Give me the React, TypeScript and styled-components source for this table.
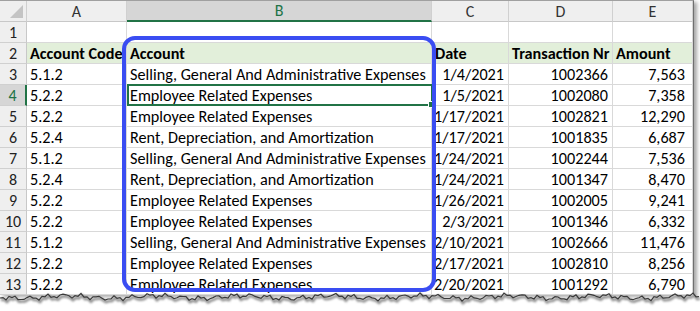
import React from 'react';
import styled, { createGlobalStyle } from 'styled-components';

const GlobalStyle = createGlobalStyle`
  html, body {
    margin: 0;
    padding: 0;
    background: #fff;
  }
  body {
    font-family: Carlito, Calibri, 'Liberation Sans', Arial, sans-serif;
  }
`;

const Frame = styled.div`
  position: relative;
  width: 700px;
  height: 311px;
  overflow: hidden;
  background: #fff;
`;

const Sheet = styled.div`
  display: grid;
  grid-template-columns: 27px 100px 305px 77px 104px 80px;
  grid-auto-rows: 21px;
  width: 693px;
  border-top: 1px solid #a0a0a0;
  border-right: 1px solid #6f6f6f;
  box-shadow: 3px 2px 4px rgba(0, 0, 0, 0.35);
  background: #fff;
  font-size: 16.2px;
  color: #000;
`;

const Corner = styled.div`
  position: relative;
  background: #efefef;
  border-right: 1px solid #d0d0d0;
  border-bottom: 1px solid #c8c8c8;

  &::after {
    content: '';
    position: absolute;
    right: 3px;
    bottom: 3px;
    width: 0;
    height: 0;
    border-left: 13px solid transparent;
    border-bottom: 13px solid #c4c4c4;
  }
`;

const ColHeader = styled.div<{ $active?: boolean }>`
  display: flex;
  align-items: center;
  justify-content: center;
  box-sizing: border-box;
  background: ${p => (p.$active ? '#d6d6d6' : '#efefef')};
  color: ${p => (p.$active ? '#217346' : '#333')};
  border-right: 1px solid #d0d0d0;
  border-bottom: ${p => (p.$active ? '2px solid #217346' : '1px solid #c8c8c8')};
  font-size: 16px;
`;

const RowHeader = styled.div<{ $active?: boolean }>`
  display: flex;
  align-items: center;
  justify-content: center;
  box-sizing: border-box;
  background: ${p => (p.$active ? '#d6d6d6' : '#efefef')};
  color: ${p => (p.$active ? '#217346' : '#222')};
  border-right: ${p => (p.$active ? '2px solid #217346' : '1px solid #c8c8c8')};
  border-bottom: 1px solid #d0d0d0;
  font-size: 16px;
`;

const Cell = styled.div<{ $align?: 'left' | 'right'; $head?: boolean; $padRight?: number }>`
  position: relative;
  display: flex;
  align-items: center;
  justify-content: ${p => (p.$align === 'right' ? 'flex-end' : 'flex-start')};
  box-sizing: border-box;
  padding: 0 ${p => p.$padRight ?? 4}px 0 3px;
  border-right: 1px solid #d9d9d9;
  border-bottom: 1px solid #d9d9d9;
  background: ${p => (p.$head ? '#e2efda' : '#fff')};
  font-weight: ${p => (p.$head ? 700 : 400)};
  white-space: nowrap;
  overflow: hidden;
`;

const Selected = styled.div`
  position: absolute;
  left: 127px;
  top: 84px;
  width: 306px;
  height: 22px;
  box-sizing: border-box;
  border: 2px solid #217346;
  pointer-events: none;

  &::after {
    content: '';
    position: absolute;
    right: -4px;
    bottom: -4px;
    width: 5px;
    height: 5px;
    background: #217346;
    border: 1px solid #fff;
  }
`;

const Highlight = styled.div`
  position: absolute;
  left: 122px;
  top: 36px;
  width: 314px;
  height: 256px;
  box-sizing: border-box;
  border: 4px solid #3a4df2;
  border-radius: 13px;
  pointer-events: none;
`;

const TornEdge = styled.svg`
  position: absolute;
  left: 0;
  bottom: 0;
  width: 700px;
  height: 22px;
`;

type Row = [string, string, string, string, string];

const SGA = 'Selling, General And Administrative Expenses';
const ERE = 'Employee Related Expenses';
const RDA = 'Rent, Depreciation, and Amortization';

const rows: Row[] = [
  ['5.1.2', SGA, '1/4/2021', '1002366', '7,563'],
  ['5.2.2', ERE, '1/5/2021', '1002080', '7,358'],
  ['5.2.2', ERE, '1/17/2021', '1002821', '12,290'],
  ['5.2.4', RDA, '1/17/2021', '1001835', '6,687'],
  ['5.1.2', SGA, '1/24/2021', '1002244', '7,536'],
  ['5.2.4', RDA, '1/24/2021', '1001347', '8,470'],
  ['5.2.2', ERE, '1/26/2021', '1002005', '9,241'],
  ['5.2.2', ERE, '2/3/2021', '1001346', '6,332'],
  ['5.1.2', SGA, '2/10/2021', '1002666', '11,476'],
  ['5.2.2', ERE, '2/17/2021', '1002810', '8,256'],
  ['5.2.2', ERE, '2/20/2021', '1001292', '6,790'],
];

// jagged "torn paper" line along the bottom
const tornPath = (() => {
  const pts: string[] = [];
  for (let x = 0; x <= 700; x += 3) {
    const n = Math.sin(x * 0.37) * 1.6 + Math.sin(x * 1.13 + 1) * 1.2 + Math.sin(x * 0.071) * 1.4;
    pts.push(`${x},${(8 + n).toFixed(1)}`);
  }
  return pts;
})();

const App: React.FC = () => {
  const line = 'M' + tornPath.join(' L');
  const fill = line + ' L700,22 L0,22 Z';

  return (
    <Frame>
      <GlobalStyle />
      <Sheet>
        <Corner />
        <ColHeader>A</ColHeader>
        <ColHeader $active>B</ColHeader>
        <ColHeader>C</ColHeader>
        <ColHeader>D</ColHeader>
        <ColHeader>E</ColHeader>

        <RowHeader>1</RowHeader>
        <Cell />
        <Cell />
        <Cell />
        <Cell />
        <Cell />

        <RowHeader>2</RowHeader>
        <Cell $head>Account Code</Cell>
        <Cell $head>Account</Cell>
        <Cell $head>Date</Cell>
        <Cell $head>Transaction Nr</Cell>
        <Cell $head>Amount</Cell>

        {rows.map((r, i) => (
          <React.Fragment key={i}>
            <RowHeader $active={i === 1}>{i + 3}</RowHeader>
            <Cell>{r[0]}</Cell>
            <Cell>{r[1]}</Cell>
            <Cell $align="right">{r[2]}</Cell>
            <Cell $align="right">{r[3]}</Cell>
            <Cell $align="right" $padRight={7}>{r[4]}</Cell>
          </React.Fragment>
        ))}
      </Sheet>

      <Selected />
      <Highlight />

      <TornEdge viewBox="0 0 700 22">
        <defs>
          <filter id="tornShadow" x="-5%" y="-50%" width="110%" height="200%">
            <feGaussianBlur stdDeviation="1.2" />
          </filter>
        </defs>
        <path d={fill} fill="#fff" />
        <path d={line} transform="translate(1,2)" fill="none" stroke="#8a8a8a" strokeWidth="2.5" filter="url(#tornShadow)" />
        <path d={line} fill="none" stroke="#3a3a3a" strokeWidth="1.2" />
      </TornEdge>
    </Frame>
  );
};

export default App;
